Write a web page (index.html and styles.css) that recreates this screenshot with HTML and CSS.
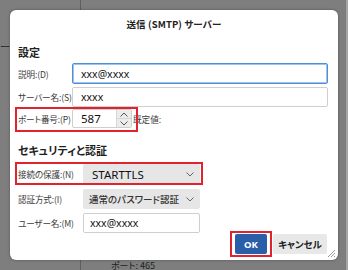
FILE: index.html
```html
<!DOCTYPE html>
<html lang="ja">
<head>
<meta charset="utf-8">
<link rel="stylesheet" href="styles.css">
</head>
<body>
<div class="desk">
  <span class="bg-vline bg-vline-top"></span>
  <span class="bg-vline bg-vline-bottom"></span>
  <span class="bg-dash">ー</span>
  <span class="bg-port">ポート: 465</span>
  <span class="bg-edge"></span>
</div>
<div class="dialog">
  <div class="title">送信 (SMTP) サーバー</div>

  <section class="sec sec1">
    <h2 class="head">設定</h2>
    <div class="row r1">
      <span class="lbl lbl1">説明:(D)</span>
      <div class="input wide focus">xxx@xxxx</div>
    </div>
    <div class="row r2">
      <span class="lbl lbl1">サーバー名:(S)</span>
      <div class="input wide">xxxx</div>
    </div>
    <div class="row r3">
      <div class="row hl hl-port">
        <span class="lbl lbl1">ポート番号:(P)</span>
        <div class="spin">
          <span class="spin-val">587</span>
          <span class="spin-btns">
            <span class="spin-btn"><svg width="8" height="5" viewBox="0 0 8 5"><polyline points="0.5,4.5 4,1 7.5,4.5" fill="none" stroke="#555" stroke-width="1"/></svg></span>
            <span class="spin-btn"><svg width="8" height="5" viewBox="0 0 8 5"><polyline points="0.5,0.5 4,4 7.5,0.5" fill="none" stroke="#555" stroke-width="1"/></svg></span>
          </span>
        </div>
      </div>
      <span class="default">既定値:</span>
    </div>
  </section>

  <section class="sec sec2">
    <h2 class="head head2">セキュリティと認証</h2>
    <div class="row r4 hl hl-conn">
      <span class="lbl lbl2">接続の保護:(N)</span>
      <div class="select big">
        <span>STARTTLS</span>
        <svg width="8" height="5" viewBox="0 0 8 5"><polyline points="0.5,0.5 4,4 7.5,0.5" fill="none" stroke="#666" stroke-width="1"/></svg>
      </div>
    </div>
    <div class="row r5">
      <span class="lbl lbl2">認証方式:(I)</span>
      <div class="select">
        <span class="jp">通常のパスワード認証</span>
        <svg width="8" height="5" viewBox="0 0 8 5"><polyline points="0.5,0.5 4,4 7.5,0.5" fill="none" stroke="#666" stroke-width="1"/></svg>
      </div>
    </div>
    <div class="row r6">
      <span class="lbl lbl2">ユーザー名:(M)</span>
      <div class="input narrow">xxx@xxxx</div>
    </div>
  </section>

  <div class="buttons">
    <button class="btn ok hl hl-ok">OK</button>
    <button class="btn cancel">キャンセル</button>
  </div>

  <svg class="grip" width="9" height="9" viewBox="0 0 9 9">
    <line x1="8" y1="1" x2="1" y2="8" stroke="#9a9a9a" stroke-width="1"/>
    <line x1="8" y1="4" x2="4" y2="8" stroke="#9a9a9a" stroke-width="1"/>
    <line x1="8" y1="7" x2="7" y2="8" stroke="#9a9a9a" stroke-width="1"/>
  </svg>
</div>
</body>
</html>
```
FILE: styles.css
```css
* { box-sizing: border-box; }

html, body {
  margin: 0;
  padding: 0;
}

body {
  width: 348px;
  height: 270px;
  overflow: hidden;
  background: #7e7e7e;
  position: relative;
  font-family: "Noto Sans CJK JP", "Noto Sans", sans-serif;
  font-feature-settings: "palt";
  color: #333;
}

/* background window content, behind the dialog */
.desk .bg-vline {
  position: absolute;
  left: 80px;
  width: 1px;
  background: #5e5e5e;
}
.desk .bg-vline-top { top: 0; height: 10px; }
.desk .bg-vline-bottom { top: 260px; height: 10px; }
.desk .bg-dash {
  position: absolute;
  left: 0;
  top: 40px;
  font-size: 10px;
  line-height: 14px;
  color: #222;
}
.desk .bg-port {
  position: absolute;
  left: 111px;
  top: 260px;
  font-size: 9px;
  line-height: 12px;
  color: #1e1e1e;
}
.desk .bg-edge {
  position: absolute;
  right: 0;
  top: 0;
  width: 2px;
  height: 270px;
  background: #a4a4a4;
}

.dialog {
  position: relative;
  margin: 10px 0 0 10px;
  width: 328px;
  height: 250px;
  background: #fff;
  border-radius: 6px;
  box-shadow: 0 0 3px rgba(0, 0, 0, 0.35);
  padding-top: 7px;
}

.title {
  text-align: center;
  font-size: 9.5px;
  line-height: 14px;
  font-weight: 700;
  color: #222;
  letter-spacing: 0.1px;
}

.sec {
  padding-left: 8px;
}

.head {
  margin: 13px 0 2px 0;
  font-size: 11px;
  line-height: 17px;
  font-weight: 700;
  color: #1f1f1f;
}
.head2 {
  margin-top: 14px;
  margin-bottom: 5px;
}

.row {
  display: flex;
  align-items: center;
}

.lbl {
  font-size: 8.6px;
  letter-spacing: -0.15px;
  color: #3c3c3c;
  white-space: nowrap;
}
.lbl1 { width: 54px; }
.lbl2 { width: 65px; }

.input {
  height: 20px;
  border: 1px solid #cfcfcf;
  border-radius: 2px;
  padding-left: 8px;
  display: flex;
  align-items: center;
  font-family: "Noto Sans", sans-serif;
  font-size: 10.5px;
  color: #111;
}
.input.wide { width: 256px; }
.input.narrow { width: 117px; padding-left: 6px; }
.input.focus {
  height: 21px;
  border-color: #4a8fd8;
  box-shadow: inset 0 0 0 1px #9cc4ee;
}

.r2 { margin-top: 3px; }
.r3 { margin-top: 2px; }
.r5 { margin-top: 5px; }
.r6 { margin-top: 4px; }

.spin {
  width: 60px;
  height: 19px;
  border: 1px solid #cfcfcf;
  border-radius: 2px;
  display: flex;
}
.spin-val {
  flex: 1;
  padding-left: 8px;
  font-family: "Noto Sans", sans-serif;
  font-size: 11.5px;
  line-height: 17px;
  color: #111;
}
.spin-btns {
  width: 15px;
  display: flex;
  flex-direction: column;
  background: #ececec;
  border-left: 1px solid #d6d6d6;
}
.spin-btn {
  flex: 1;
  display: flex;
  align-items: center;
  justify-content: center;
}
.spin-btn + .spin-btn { border-top: 1px solid #d6d6d6; }

.default {
  margin-left: 1px;
  font-size: 8.6px;
  color: #3c3c3c;
}

.select {
  width: 117px;
  height: 20px;
  background: #e6e6e6;
  border-radius: 2px;
  display: flex;
  align-items: center;
  justify-content: space-between;
  padding: 0 6px 0 6px;
  font-size: 9.5px;
  color: #333;
}
.select.big {
  padding-left: 9px;
  font-family: "Noto Sans", sans-serif;
  font-size: 11.5px;
  color: #111;
}
.select .jp { font-weight: 500; }

/* red annotation boxes */
.hl { position: relative; }
.hl::after {
  content: "";
  position: absolute;
  border: 2px solid #e2232d;
  pointer-events: none;
}
.hl-port::after { top: -2px; left: -3px; right: -6px; bottom: -4px; }
.hl-conn { width: 182px; margin-top: 0; }
.hl-conn::after { top: -2px; left: -3px; right: -3px; bottom: -1px; }
.hl-ok::after { top: -3px; left: -5px; right: -5px; bottom: -3px; }

.buttons {
  display: flex;
  justify-content: flex-end;
  gap: 6px;
  padding-right: 11px;
  margin-top: 1px;
}

.btn {
  height: 20px;
  border: none;
  border-radius: 2px;
  font-family: "Noto Sans CJK JP", "Noto Sans", sans-serif;
  font-feature-settings: "palt";
  font-size: 9.5px;
  font-weight: 700;
  padding: 0;
  margin: 0;
}
.btn.ok {
  width: 32px;
  background: #2b5ea9;
  color: #fff;
  font-family: "Noto Sans", sans-serif;
}
.btn.cancel {
  width: 54px;
  background: #e8e8e8;
  color: #222;
}

.grip {
  position: absolute;
  right: 2px;
  bottom: 2px;
}
```
